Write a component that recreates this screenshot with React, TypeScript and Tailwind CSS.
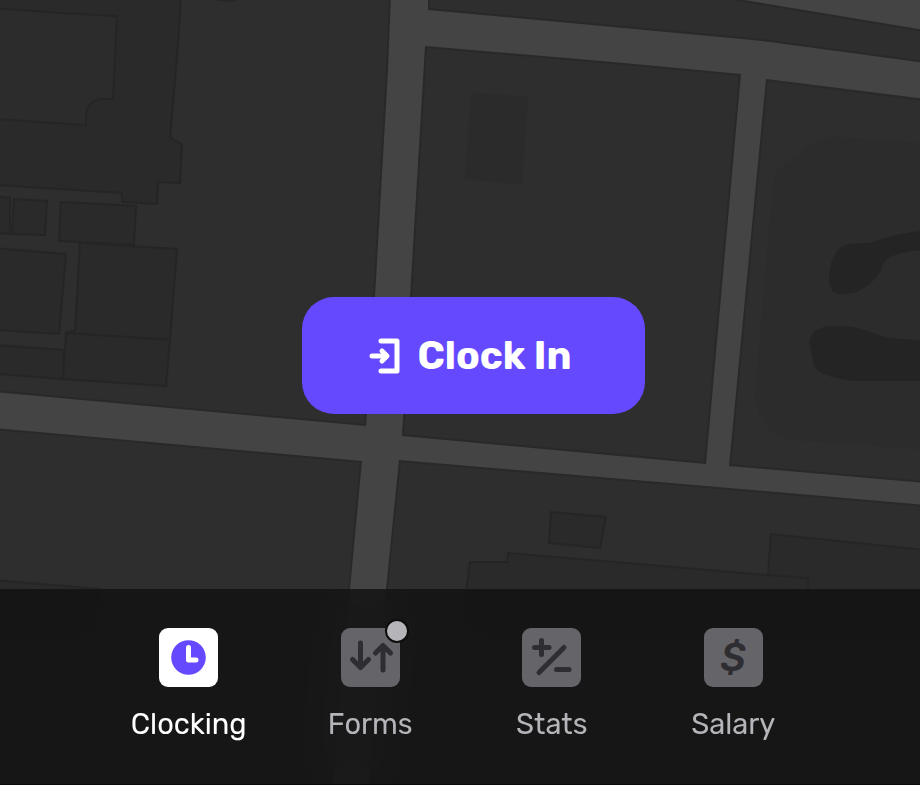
import type { ReactNode } from "react";

function MapBackground() {
  return (
    <svg
      className="absolute inset-0 h-full w-full"
      viewBox="0 0 920 785"
      preserveAspectRatio="xMidYMid slice"
      aria-hidden="true"
    >
      <rect width="920" height="785" fill="#2e2e2e" />

      {/* park and water */}
      <path d="M471 92L528 97L522 185L465 179Z" fill="#2b2b2b" />
      <path d="M920 143L835 137Q822 137 813 144L782 166Q774 173 773 185L755 395Q755 408 764 422Q773 437 790 440L920 449Z" fill="#2c2c2c" />
      <g fill="#242424">
        <path d="M834 292C825 284 829 258 840 248C849 241 860 245 873 242C888 236 900 234 920 231V250C902 253 889 254 883 264C880 278 868 286 857 292C848 294 840 296 834 292Z" />
        <path d="M809 340C815 327 824 326 838 326C856 325 870 332 882 336C894 339 904 339 920 340V381H854C835 379 818 374 814 366Z" />
      </g>

      {/* buildings */}
      <g fill="#2a2a2a" stroke="#252525" strokeWidth="2">
        <path d="M-5 -5H181L178 45L170 138L182 144L180 183L158 182L157 204L122 202V193L-5 185Z" />
        <path d="M-5 8L60 13L117 16L113 99H100Q88 102 86 113V125L-5 119Z" fill="#2c2c2c" />
        <path d="M-5 196L10 198V234L-5 233Z" />
        <path d="M14 199L47 201L45 235L12 234Z" />
        <path d="M61 202L136 206L134 245L59 241Z" />
        <path d="M80 243L177 249L170 340L66 333L75 330Z" />
        <path d="M66 333L170 340L166 386L63 379Z" />
        <path d="M-5 248L66 254L59 334L-5 330Z" />
        <path d="M-5 345L63 350V379L-5 374Z" />
        <path d="M551 512L606 517L600 548L549 543Z" />
        <path d="M465 600L470 562H507L508 553L768 575L771 534L925 550V640H465Z" />
        <path d="M768 575L808 578V589" />
        <path d="M-5 580L100 589V640H-5Z" />
        <path d="M196 -3L232 1L242 -3Z" />
      </g>

      {/* streets */}
      <g stroke="#292929" strokeWidth="4" fill="#444444" strokeLinejoin="round">
        <path d="M738 -1L925 30V-5H738Z" />
        <path d="M391 -5L388 70L375 297L366 426L-5 392V428L362 461L350 589L332 790H368L386 589L399 460L706 486L925 505V483L729 466L766 79L925 99V63L770 42L742 39L613 27L428 10V-5ZM425 46L613 62L741 74L706 464L402 436L410 297Z" fillRule="evenodd" />
      </g>
      <path d="M391 -5L388 70L375 297L366 426L-5 392V428L362 461L350 589L332 790H368L386 589L399 460L706 486L925 505V483L729 466L766 79L925 99V63L770 42L742 39L613 27L428 10V-5ZM425 46L613 62L741 74L706 464L402 436L410 297Z" fillRule="evenodd" fill="#444444" />
      <path d="M738 -1L925 30V-5H738Z" fill="#444444" />
    </svg>
  );
}

function ClockInIcon() {
  return (
    <svg width="31" height="36" viewBox="0 0 31 36" fill="none" stroke="currentColor" strokeLinecap="round" strokeLinejoin="round" aria-hidden="true">
      <path d="M12 3H28V33H12" strokeWidth="5" />
      <path d="M3 18H17" strokeWidth="5" />
      <path d="M13 13L18 18L13 23" strokeWidth="5" />
    </svg>
  );
}

function ClockGlyph() {
  return (
    <svg width="59" height="59" viewBox="0 0 59 59" fill="none" aria-hidden="true">
      <circle cx="29.5" cy="29.5" r="17.3" fill="#6549ff" />
      <path d="M29.5 19.5V32H37" stroke="#ffffff" strokeWidth="5" strokeLinecap="round" strokeLinejoin="round" />
    </svg>
  );
}

function ArrowsGlyph() {
  return (
    <svg width="59" height="59" viewBox="0 0 59 59" fill="none" stroke="currentColor" strokeWidth="5" strokeLinecap="round" strokeLinejoin="round" aria-hidden="true">
      <path d="M19.5 15V39M11.5 31.5L19.5 39.5L27.5 31.5" />
      <path d="M42 42V18M34.5 25L42 17.5L49.5 25" />
    </svg>
  );
}

function PlusMinusGlyph() {
  return (
    <svg width="59" height="59" viewBox="0 0 59 59" fill="none" stroke="currentColor" strokeWidth="5" strokeLinecap="round" aria-hidden="true">
      <path d="M19.5 12.5V26.5M12.5 19.5H27" />
      <path d="M42 19.5L17 44.5" />
      <path d="M34.5 41.5H47" />
    </svg>
  );
}

type TabProps = { label: string; active?: boolean; badge?: boolean; children: ReactNode };

function Tab({ label, active, badge, children }: TabProps) {
  return (
    <li className="flex-1">
      <a
        href="#"
        aria-current={active ? "page" : undefined}
        className={`flex flex-col items-center gap-[19px] text-[29px] leading-[36px] ${active ? "text-white" : "text-[#b5b4b9]"}`}
      >
        <span
          className={`relative flex size-[59px] items-center justify-center rounded-[9px] ${active ? "bg-white" : "bg-[#656469] text-[#2e2d31]"}`}
        >
          {children}
          {badge && (
            <span className="absolute -top-[9px] -right-[9px] size-6 rounded-full border-2 border-[#0d0d0e] bg-[#b5b4b9]" />
          )}
        </span>
        {label}
      </a>
    </li>
  );
}

export default function App() {
  return (
    <div className="relative flex min-h-screen flex-col overflow-hidden bg-[#2e2e2e] font-['Rubik','Roboto',sans-serif]">
      <MapBackground />
      <main className="relative flex flex-1 items-end justify-center pb-[175px] pl-[27px]">
        <button
          type="button"
          className="flex h-[117px] w-[343px] items-center justify-center gap-[17px] rounded-[32px] bg-[#6549ff] pr-[6px] text-[39px] leading-[48px] font-bold text-white"
        >
          <ClockInIcon />
          Clock In
        </button>
      </main>
      <nav aria-label="Main" className="relative h-[196px] border-b border-[#0a0a0a] bg-[#0f0f10]/75 pt-[39px] pr-24 pl-[98px] backdrop-blur-xl">
        <ul className="flex">
          <Tab label="Clocking" active>
            <ClockGlyph />
          </Tab>
          <Tab label="Forms" badge>
            <ArrowsGlyph />
          </Tab>
          <Tab label="Stats">
            <PlusMinusGlyph />
          </Tab>
          <Tab label="Salary">
            <span aria-hidden="true" className="text-[39px] leading-[36px] font-medium italic">
              $
            </span>
          </Tab>
        </ul>
      </nav>
    </div>
  );
}
